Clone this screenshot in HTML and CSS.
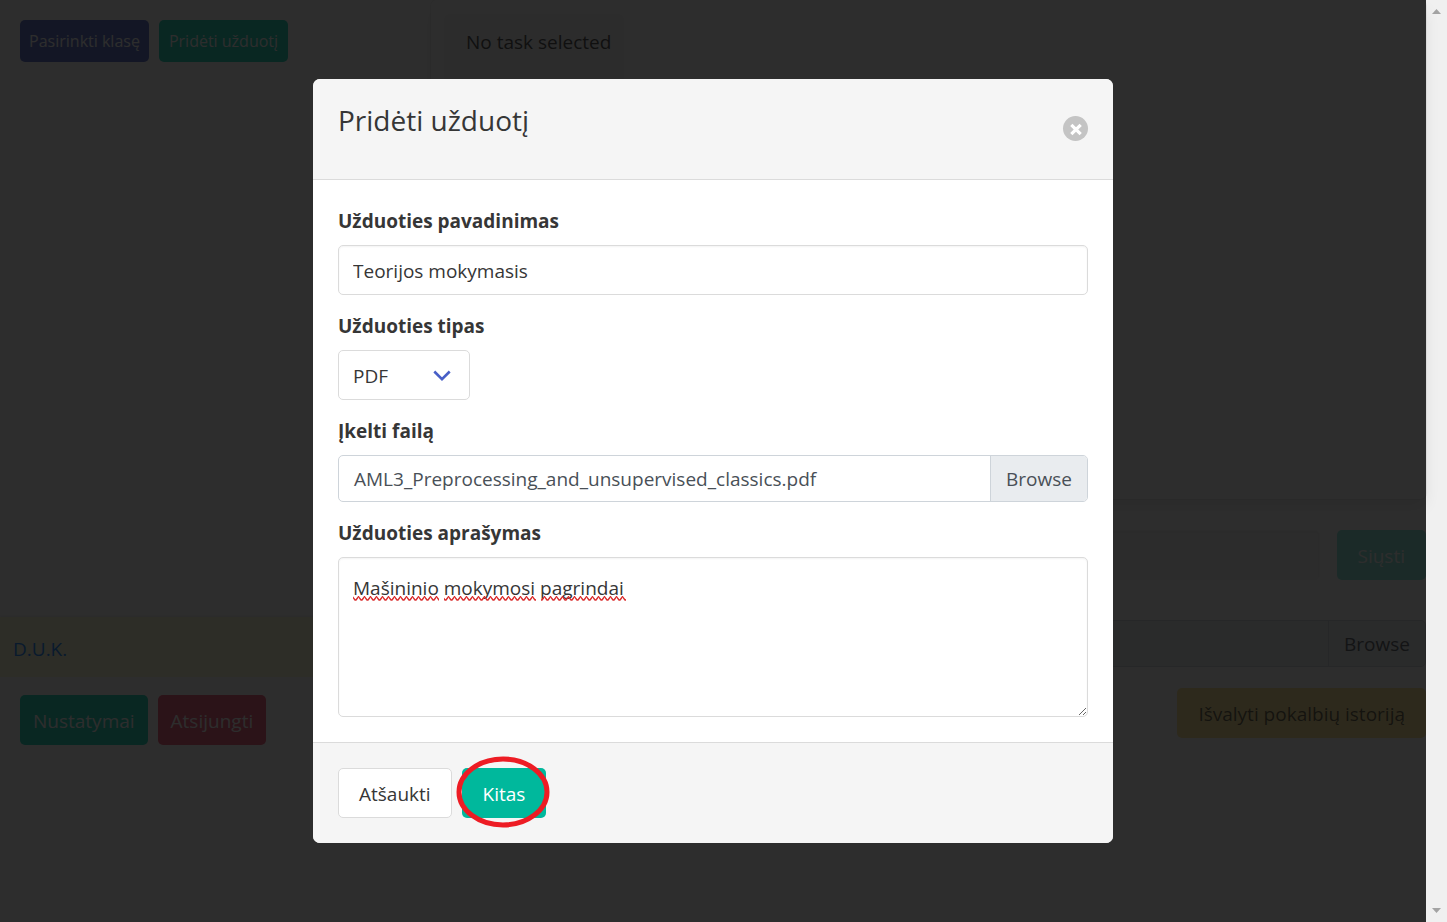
FILE: index.html
```html
<!DOCTYPE html>
<html lang="lt">
<head>
<meta charset="utf-8">
<title>Pridėti užduotį</title>
<link rel="stylesheet" href="styles.css">
</head>
<body>
<div class="window">
  <div class="view">
    <div class="page">
      <aside class="sidebar">
        <div class="toolbar">
          <button class="button small link" type="button">Pasirinkti klasę</button>
          <button class="button small primary" type="button">Pridėti užduotį</button>
        </div>
        <div class="faq"><a href="#duk">D.U.K.</a></div>
        <div class="toolbar account">
          <button class="button snug primary" type="button">Nustatymai</button>
          <button class="button snug danger" type="button">Atsijungti</button>
        </div>
      </aside>
      <main class="chat">
        <section class="chat-box"><p class="task">No task selected</p></section>
        <div class="message-row">
          <input class="input message" type="text" aria-label="Žinutė">
          <button class="button send" type="button">Siųsti</button>
        </div>
        <label class="file disabled">
          <input class="file-input" type="file">
          <span class="file-name"></span><span class="file-browse">Browse</span>
        </label>
        <button class="button warning" type="button">Išvalyti pokalbių istoriją</button>
      </main>
    </div>
    <div class="overlay">
      <form class="modal" role="dialog" aria-labelledby="modal-title">
        <header class="modal-head">
          <h1 class="modal-title" id="modal-title">Pridėti užduotį</h1>
          <button class="close" type="button" aria-label="Uždaryti">
            <svg width="25" height="25" viewBox="0 0 25 25"><path d="M8.300 8.800l9.400 9.400M17.700 8.800l-9.400 9.400" stroke="#fff" stroke-width="3.200"/></svg>
          </button>
        </header>
        <div class="modal-body">
          <div class="field">
            <label class="label" for="name">Užduoties pavadinimas</label>
            <input class="input" id="name" type="text" value="Teorijos mokymasis">
          </div>
          <div class="field">
            <label class="label" for="type">Užduoties tipas</label>
            <div class="select">
              <select id="type"><option>PDF</option></select>
              <svg class="chevron" width="18" height="12" viewBox="0 0 18 12"><path d="M1.300 1.500L9 9.200 16.700 1.500" fill="none" stroke="#485fc7" stroke-width="2.600"/></svg>
            </div>
          </div>
          <div class="field">
            <label class="label" for="file">Įkelti failą</label>
            <label class="file">
              <input class="file-input" id="file" type="file">
              <span class="file-name">AML3_Preprocessing_and_unsupervised_classics.pdf</span><span class="file-browse">Browse</span>
            </label>
          </div>
          <div class="field">
            <label class="label" for="about">Užduoties aprašymas</label>
            <div class="textarea-wrap">
              <textarea class="textarea" id="about" spellcheck="false">Mašininio mokymosi pagrindai</textarea>
              <svg class="spelling" width="276" height="5" viewBox="0 0 276 5">
                <defs><pattern id="wave" width="6" height="5" patternUnits="userSpaceOnUse"><path d="M-1 0L2 4h1L6 0" fill="none" stroke="#d92b2b" stroke-width="1.400"/></pattern></defs>
                <path d="M0 0h86v5H0zM91 0h92v5H91zM188 0h85v5h-85z" fill="url(#wave)"/>
              </svg>
            </div>
          </div>
        </div>
        <footer class="modal-foot">
          <button class="button plain" type="button">Atšaukti</button>
          <div class="marked">
            <button class="button next" type="submit">Kitas</button>
            <svg class="ring" width="94" height="72" viewBox="0 0 94 72"><ellipse cx="47" cy="36" rx="44" ry="33" fill="none" stroke="#ed1c24" stroke-width="5"/></svg>
          </div>
        </footer>
      </form>
    </div>
  </div>
  <div class="scrollbar" aria-hidden="true">
    <svg width="9" height="5" viewBox="0 0 9 5"><path d="M0 5L4.500 0 9 5z" fill="#a3a3a3"/></svg>
    <svg width="9" height="5" viewBox="0 0 9 5"><path d="M0 0l4.500 5L9 0z" fill="#a3a3a3"/></svg>
  </div>
</div>
</body>
</html>
```
FILE: styles.css
```css
* { box-sizing: border-box; }

body {
  margin: 0;
  color: #363636;
  background: #fff;
}

body, button, input, select, textarea {
  font-family: "Open Sans", "Noto Sans", sans-serif;
  font-size: 19px;
  line-height: 30px;
}

.window {
  display: flex;
  height: 100vh;
  overflow: hidden;
}

.view {
  position: relative;
  flex: 1;
  min-width: 0;
}

.scrollbar {
  display: flex;
  flex-direction: column;
  justify-content: space-between;
  align-items: center;
  width: 21px;
  padding: 9px 0;
  background: #f0f0f0;
}

/* Page under the dialog */

.page {
  display: flex;
  gap: 17px;
  height: 100%;
}

.sidebar {
  display: flex;
  flex-direction: column;
  flex: 0 0 414px;
}

.toolbar {
  display: flex;
  gap: 10px;
  padding: 20px;
}

.toolbar.account {
  padding: 18px 20px;
  margin-bottom: 159px;
}

.faq {
  margin-top: auto;
  padding: 17px 13px 13px;
  height: 60px;
  background: #fffbd0;
  box-shadow: 0 -1px 3px rgba(10, 10, 10, .1);
}

.faq a {
  color: #007bff;
  text-decoration: none;
}

.chat {
  display: flex;
  flex-direction: column;
  flex: 1;
  min-width: 0;
}

.chat-box {
  height: 499px;
  padding: 14px 13px;
  border-radius: 6px;
  box-shadow: 0 8px 16px -2px rgba(10, 10, 10, .1), 0 0 0 1px rgba(10, 10, 10, .06);
}

.task {
  width: 180px;
  height: 100px;
  margin: 0;
  padding: 13px 22px;
  border-radius: 6px;
  background: #f5f5f5;
  white-space: nowrap;
}

.message-row {
  display: flex;
  gap: 17px;
  padding: 31px 0 40px;
}

/* Controls */

.button {
  height: 50px;
  padding: 2px 20px 0;
  border: 1px solid transparent;
  border-radius: 5px;
  color: #fff;
  white-space: nowrap;
}

.button.small {
  height: 42px;
  width: 129px;
  padding: 0;
  font-size: 16px;
}

.button.snug { padding: 2px 12px 0; }
.link { background: #485fc7; }
.primary { background: #00d1b2; }
.danger { background: #f14668; }
.next { background: #00b89c; }

.send {
  background: #00d1b2;
  opacity: .5;
}

.warning {
  align-self: flex-end;
  margin-top: 21px;
  background: #ffe08a;
  color: rgba(0, 0, 0, .7);
}

.plain {
  border-color: #dbdbdb;
  background: #fff;
  color: #363636;
}

.input, .textarea, .select select {
  display: block;
  width: 100%;
  height: 50px;
  margin: 0;
  padding: 2px 14px 0;
  border: 1px solid #dbdbdb;
  border-radius: 5px;
  background: #fff;
  color: #363636;
}

.input, .textarea { box-shadow: inset 0 1px 2px rgba(10, 10, 10, .05); }

.message {
  border-color: #f5f5f5;
  background: #f5f5f5;
}

.textarea-wrap { position: relative; }

.textarea {
  height: 160px;
  padding: 15px 14px;
  resize: vertical;
}

.spelling {
  position: absolute;
  left: 15px;
  top: 39px;
  pointer-events: none;
}

.select {
  position: relative;
  width: 132px;
}

.select select { appearance: none; }

.chevron {
  position: absolute;
  right: 19px;
  top: 20px;
  pointer-events: none;
}

.file {
  display: flex;
  position: relative;
  height: 47px;
  border: 1px solid #ced4da;
  border-radius: 5px;
  overflow: hidden;
  color: #495057;
  background: #fff;
}

.file-input {
  position: absolute;
  inset: 0;
  opacity: 0;
}

.file-name {
  flex: 1;
  padding: 8px 15px;
}

.file-browse {
  padding: 8px 15px;
  border-left: 1px solid #ced4da;
  background: #e9ecef;
}

.disabled { background: #e9ecef; }

/* Dialog */

.overlay {
  position: absolute;
  inset: 0;
  display: flex;
  align-items: center;
  justify-content: center;
  background: rgba(10, 10, 10, .86);
}

.modal {
  width: 800px;
  max-width: 100%;
  border-radius: 7px;
  overflow: hidden;
  background: #fff;
}

.modal-head {
  display: flex;
  justify-content: space-between;
  align-items: center;
  padding: 24px 25px 26px;
  background: #f5f5f5;
  border-bottom: 1px solid #dbdbdb;
}

.modal-title {
  margin: 0 0 16px;
  font-size: 28px;
  line-height: 34px;
  font-weight: 400;
}

.close {
  width: 25px;
  height: 25px;
  padding: 0;
  border: 0;
  border-radius: 50%;
  background: #c4c4c4;
}

.close svg { display: block; }

.modal-body {
  display: flex;
  flex-direction: column;
  gap: 15px;
  padding: 25px;
}

.label {
  display: block;
  margin-bottom: 8px;
  line-height: 32px;
  font-weight: 700;
}

.modal-foot {
  display: flex;
  gap: 10px;
  padding: 25px;
  background: #f5f5f5;
  border-top: 1px solid #dbdbdb;
}

.marked { position: relative; }

.ring {
  position: absolute;
  left: -6px;
  top: -12px;
  pointer-events: none;
}
```
